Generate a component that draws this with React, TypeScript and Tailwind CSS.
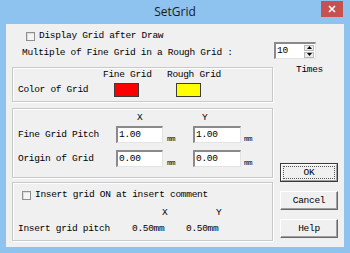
import React from 'react';

const mono = "font-['Liberation_Mono',monospace] text-[9.5px] tracking-[-0.3px] text-black leading-[10px]";

const Check: React.FC = () => (
  <span className="block w-[9px] h-[9px] border border-[#8e8f8f] bg-[#f4f4f4] shadow-[inset_1px_1px_0_#dcdcdc]" />
);

const Field: React.FC<{ value: string; w: string }> = ({ value, w }) => (
  <div
    className={`${w} h-[17px] bg-white border-t-2 border-l-2 border-b border-r border-t-[#8a8a8a] border-l-[#8a8a8a] border-b-[#e3e3e3] border-r-[#e3e3e3] flex items-center pl-[1px] ${mono}`}
  >
    {value}
  </div>
);

const Button: React.FC<{ label: string; primary?: boolean }> = ({ label, primary }) =>
  primary ? (
    <div className="h-[19px] border border-[#3a3a3a] bg-[#f0f0f0]">
      <div className="h-full border border-t-white border-l-white border-b-[#a0a0a0] border-r-[#a0a0a0] p-[1px]">
        <div className={`h-full border border-dotted border-[#555] flex items-center justify-center ${mono}`}>{label}</div>
      </div>
    </div>
  ) : (
    <div className="h-[19px] bg-[#f0f0f0] border border-t-white border-l-white border-b-[#696969] border-r-[#696969] shadow-[inset_-1px_-1px_0_#a0a0a0]">
      <div className={`h-full flex items-center justify-center ${mono}`}>{label}</div>
    </div>
  );

const Group: React.FC<{ h: string; children: React.ReactNode; className?: string }> = ({ h, children, className }) => (
  <div className={`${h} border border-[#c9c9c9] shadow-[inset_1px_1px_0_#fff,1px_1px_0_#fff] ${className ?? ''}`}>{children}</div>
);

const Mm: React.FC = () => (
  <span className="font-['Liberation_Mono',monospace] text-[7.5px] leading-[8px] tracking-[-0.4px] text-black">mm</span>
);

export default function App() {
  return (
    <div className="w-[350px] h-[253px] bg-[#8fc3ef] flex flex-col overflow-hidden">
      {/* title bar */}
      <div className="relative h-[24px] flex items-center justify-center">
        <span className="font-['Open_Sans',sans-serif] font-normal text-[12px] text-[#1a1a1a] leading-none pb-[1px]">SetGrid</span>
        <div className="absolute top-[1px] right-[7px] w-[22px] h-[16px] bg-[#c75050] flex items-center justify-center">
          <svg width="8" height="8" viewBox="0 0 8 8">
            <path d="M1 1 L7 7 M7 1 L1 7" stroke="#fff" strokeWidth="1.6" />
          </svg>
        </div>
      </div>

      {/* dialog body */}
      <div className="mx-[6px] h-[223px] bg-[#f0f0f0] flex flex-col">
        <div className="h-[12px] mt-[6px] pl-[20px] flex items-center gap-[4px]">
          <Check />
          <span className={mono}>Display Grid after Draw</span>
        </div>

        <div className="h-[17px] flex">
          <span className={`self-end pb-[1px] pl-[16px] ${mono}`}>Multiple of Fine Grid in a Rough Grid :</span>
          <div className="ml-auto mr-[28px] w-[42px] h-[17px] bg-white border-t-2 border-l-2 border-b border-r border-t-[#8a8a8a] border-l-[#8a8a8a] border-b-[#e3e3e3] border-r-[#e3e3e3] flex items-center justify-between">
            <span className={`pl-[1px] ${mono}`}>10</span>
            <div className="w-[10px] h-[13px] mr-[1px] flex flex-col gap-[1px]">
              <div className="flex-1 bg-[#ececec] border border-[#b8b8b8] flex items-center justify-center">
                <svg width="5" height="3" viewBox="0 0 5 3"><path d="M2.5 0 L5 3 L0 3 Z" fill="#000" /></svg>
              </div>
              <div className="flex-1 bg-[#ececec] border border-[#b8b8b8] flex items-center justify-center">
                <svg width="5" height="3" viewBox="0 0 5 3"><path d="M0 0 L5 0 L2.5 3 Z" fill="#000" /></svg>
              </div>
            </div>
          </div>
        </div>

        <div className="flex mt-[6px]">
          {/* left column: group boxes */}
          <div className="ml-[6px] w-[261px] pt-[2px] flex flex-col">
            <Group h="h-[35px]" className="pt-[2px] pl-[5px]">
              <div className="grid grid-cols-[85px_64px_1fr] h-[10px]">
                <span />
                <span className={mono}>Fine Grid</span>
                <span className={mono}>Rough Grid</span>
              </div>
              <div className="grid grid-cols-[85px_64px_1fr] h-[14px] mt-[3px] items-center">
                <span className={mono}>Color of Grid</span>
                <span className="ml-[11px] w-[25px] h-[14px] bg-[#ff0000] border border-[#3c3c3c]" />
                <span className="ml-[9px] w-[25px] h-[14px] bg-[#ffff00] border border-[#3c3c3c]" />
              </div>
            </Group>

            <Group h="h-[70px]" className="mt-[6px] pt-[4px] pl-[5px]">
              <div className="grid grid-cols-[98px_77px_1fr] h-[10px]">
                <span />
                <span className={`ml-[21px] ${mono}`}>X</span>
                <span className={`ml-[9px] ${mono}`}>Y</span>
              </div>
              <div className="grid grid-cols-[98px_77px_1fr] h-[17px] mt-[3px] items-center">
                <span className={mono}>Fine Grid Pitch</span>
                <div className="flex items-end gap-[4px]">
                  <Field value="1.00" w="w-[47px]" />
                  <Mm />
                </div>
                <div className="flex items-end gap-[3px]">
                  <Field value="1.00" w="w-[48px]" />
                  <Mm />
                </div>
              </div>
              <div className="grid grid-cols-[98px_77px_1fr] h-[17px] mt-[7px] items-center">
                <span className={mono}>Origin of Grid</span>
                <div className="flex items-end gap-[4px]">
                  <Field value="0.00" w="w-[47px]" />
                  <Mm />
                </div>
                <div className="flex items-end gap-[3px]">
                  <Field value="0.00" w="w-[48px]" />
                  <Mm />
                </div>
              </div>
            </Group>

            <Group h="h-[59px]" className="mt-[4px] pt-[7px] pl-[5px]">
              <div className="h-[10px] pl-[4px] flex items-center gap-[4px]">
                <Check />
                <span className={mono}>Insert grid ON at insert comment</span>
              </div>
              <div className="grid grid-cols-[114px_54px_1fr] h-[10px] mt-[8px]">
                <span />
                <span className={`ml-[30px] ${mono}`}>X</span>
                <span className={`ml-[30px] ${mono}`}>Y</span>
              </div>
              <div className="grid grid-cols-[114px_54px_1fr] h-[10px] mt-[6px]">
                <span className={mono}>Insert grid pitch</span>
                <span className={mono}>0.50mm</span>
                <span className={mono}>0.50mm</span>
              </div>
            </Group>
          </div>

          {/* right column */}
          <div className="ml-[7px] w-[58px] flex flex-col">
            <span className={`pl-[16px] h-[10px] ${mono}`}>Times</span>
            <div className="mt-[88px]">
              <Button label="OK" primary />
            </div>
            <div className="mt-[9px]">
              <Button label="Cancel" />
            </div>
            <div className="mt-[9px]">
              <Button label="Help" />
            </div>
          </div>
        </div>
      </div>
    </div>
  );
}
